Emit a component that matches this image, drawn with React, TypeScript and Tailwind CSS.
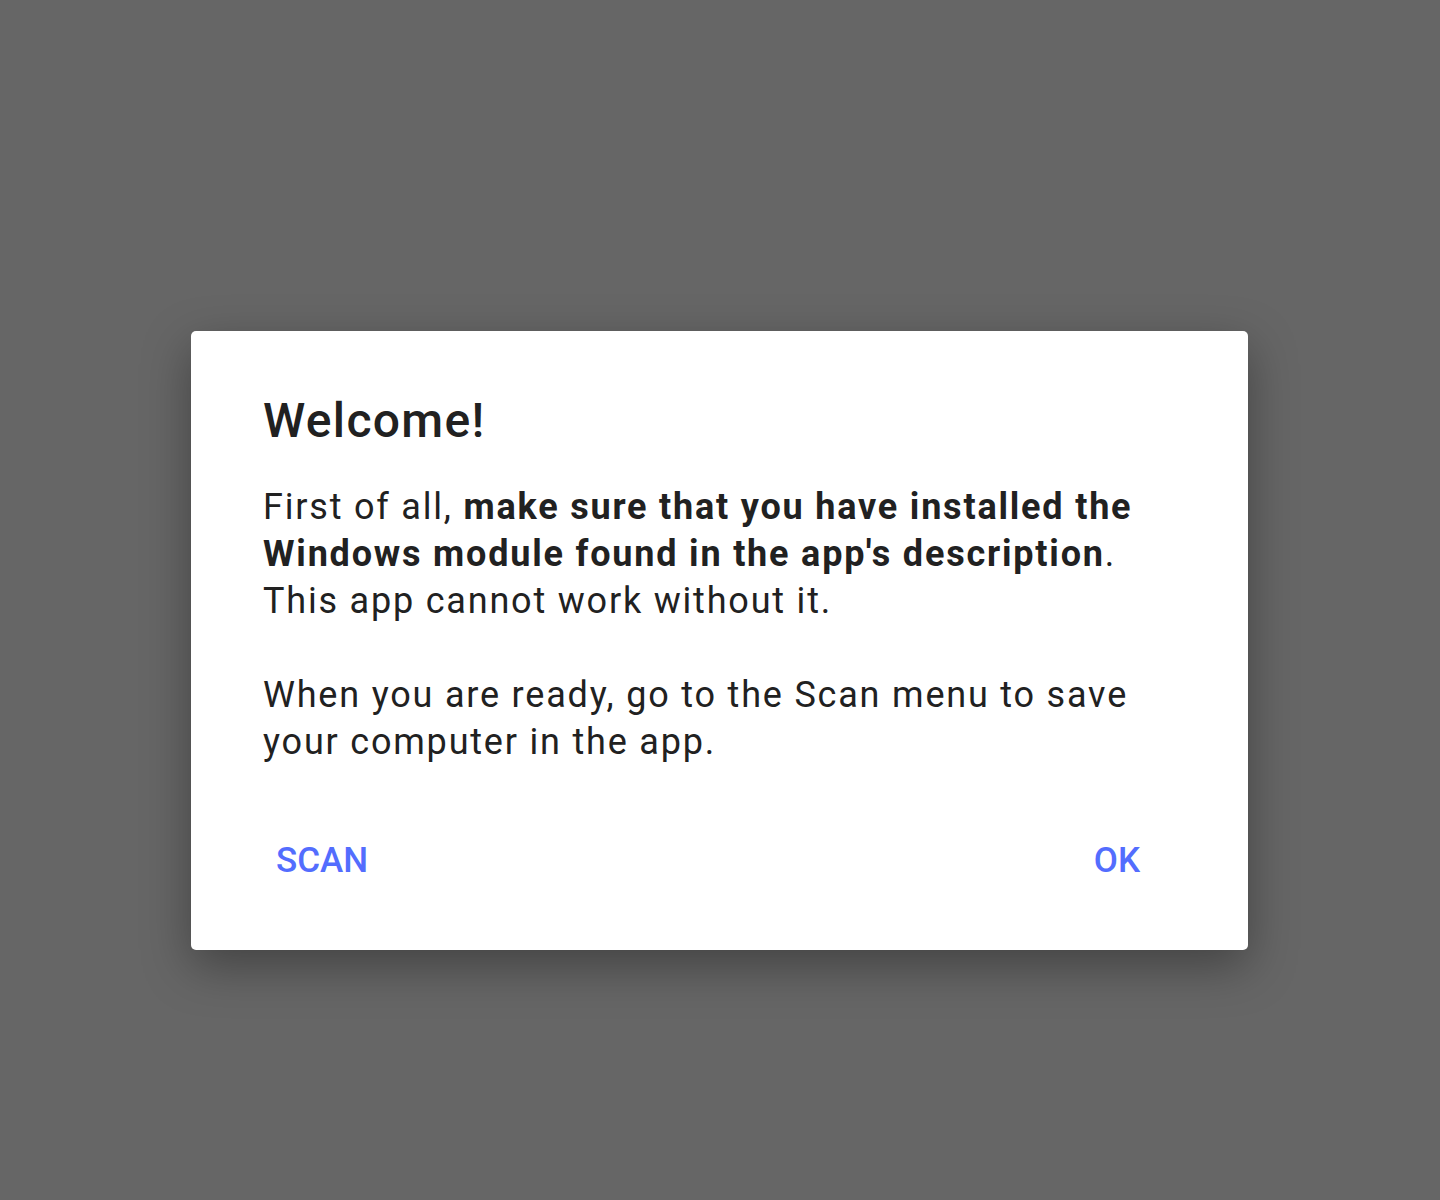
export default function App() {
  return (
    <div className="min-h-[1200px] w-full bg-[#666666] flex items-start justify-start pl-[191px] pt-[331px] font-['Roboto',sans-serif]">
      <div className="w-[1057px] h-[619px] bg-white rounded-[5px] shadow-[0_16px_48px_rgba(0,0,0,0.35)] pl-[72px] pr-[72px] pt-[62px] flex flex-col">
        <h1 className="text-[48px] leading-[56px] font-medium tracking-[1.3px] text-[#212121]">Welcome!</h1>
        <div className="mt-[35px] text-[36px] leading-[47px] tracking-[1.8px] text-[#212121]">
          <p>
            First of all, <b className="font-bold">make sure that you have installed the Windows module found in the app's description</b>.
            This app cannot work without it.
          </p>
          <p className="mt-[47px]">When you are ready, go to the Scan menu to save your computer in the app.</p>
        </div>
        <div className="mt-[75px] flex justify-between pl-[13px] pr-[36px]">
          <button className="text-[35px] leading-[40px] font-medium text-[#536dfe]">SCAN</button>
          <button className="text-[35px] leading-[40px] font-medium text-[#536dfe]">OK</button>
        </div>
      </div>
    </div>
  )
}
